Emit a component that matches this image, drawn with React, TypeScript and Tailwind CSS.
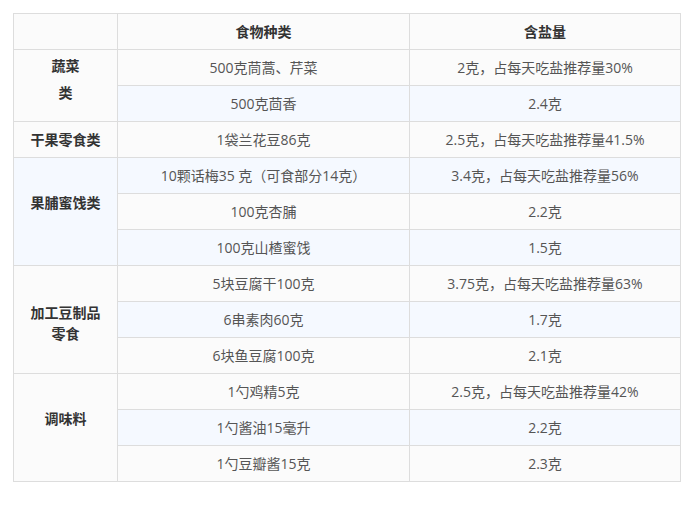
import React from 'react';

type Row = { food: string; salt: string; blue?: boolean };
type Group = { label: React.ReactNode; rows: Row[]; blue?: boolean; pad?: string };

const groups: Group[] = [
  {
    label: (
      <div className="flex flex-col gap-[6px]">
        <span>蔬菜</span>
        <span>类</span>
      </div>
    ),
    pad: 'pb-[14px]',
    rows: [
      { food: '500克茼蒿、芹菜', salt: '2克，占每天吃盐推荐量30%' },
      { food: '500克茴香', salt: '2.4克', blue: true },
    ],
  },
  {
    label: '干果零食类',
    rows: [{ food: '1袋兰花豆86克', salt: '2.5克，占每天吃盐推荐量41.5%' }],
  },
  {
    label: '果脯蜜饯类',
    blue: true,
    pad: 'pb-[18px]',
    rows: [
      { food: '10颗话梅35 克（可食部分14克）', salt: '3.4克，占每天吃盐推荐量56%', blue: true },
      { food: '100克杏脯', salt: '2.2克' },
      { food: '100克山楂蜜饯', salt: '1.5克', blue: true },
    ],
  },
  {
    label: (
      <div className="flex flex-col">
        <span>加工豆制品</span>
        <span>零食</span>
      </div>
    ),
    pad: 'pt-[6px]',
    rows: [
      { food: '5块豆腐干100克', salt: '3.75克，占每天吃盐推荐量63%' },
      { food: '6串素肉60克', salt: '1.7克', blue: true },
      { food: '6块鱼豆腐100克', salt: '2.1克' },
    ],
  },
  {
    label: '调味料',
    pad: 'pb-[18px]',
    rows: [
      { food: '1勺鸡精5克', salt: '2.5克，占每天吃盐推荐量42%' },
      { food: '1勺酱油15毫升', salt: '2.2克', blue: true },
      { food: '1勺豆瓣酱15克', salt: '2.3克' },
    ],
  },
];

export default function App() {
  return (
    <div
      className="min-h-screen bg-white pl-[13px] pt-[13px]"
      style={{ fontFamily: '"Open Sans", "Noto Sans CJK SC", sans-serif' }}
    >
      <table className="w-[668px] table-fixed border-collapse text-[14px] text-[#555]">
        <colgroup>
          <col className="w-[104px]" />
          <col className="w-[292px]" />
          <col />
        </colgroup>
        <thead>
          <tr className="h-[36px] bg-[#fbfbfb]">
            <th className="border border-[#ddd]"></th>
            <th className="border border-[#ddd] text-center font-bold text-[#333]">食物种类</th>
            <th className="border border-[#ddd] text-center font-bold text-[#333]">含盐量</th>
          </tr>
        </thead>
        <tbody>
          {groups.map((g, gi) =>
            g.rows.map((r, ri) => (
              <tr key={`${gi}-${ri}`} className={`h-[36px] ${r.blue ? 'bg-[#f5f9ff]' : 'bg-[#fbfbfb]'}`}>
                {ri === 0 && (
                  <td
                    rowSpan={g.rows.length}
                    className={`border border-[#ddd] text-center align-middle font-bold text-[#333] ${
                      g.blue ? 'bg-[#f5f9ff]' : 'bg-[#fbfbfb]'
                    } ${g.pad ?? ''}`}
                  >
                    {g.label}
                  </td>
                )}
                <td className="border border-[#ddd] text-center">{r.food}</td>
                <td className="border border-[#ddd] text-center">{r.salt}</td>
              </tr>
            ))
          )}
        </tbody>
      </table>
    </div>
  );
}
